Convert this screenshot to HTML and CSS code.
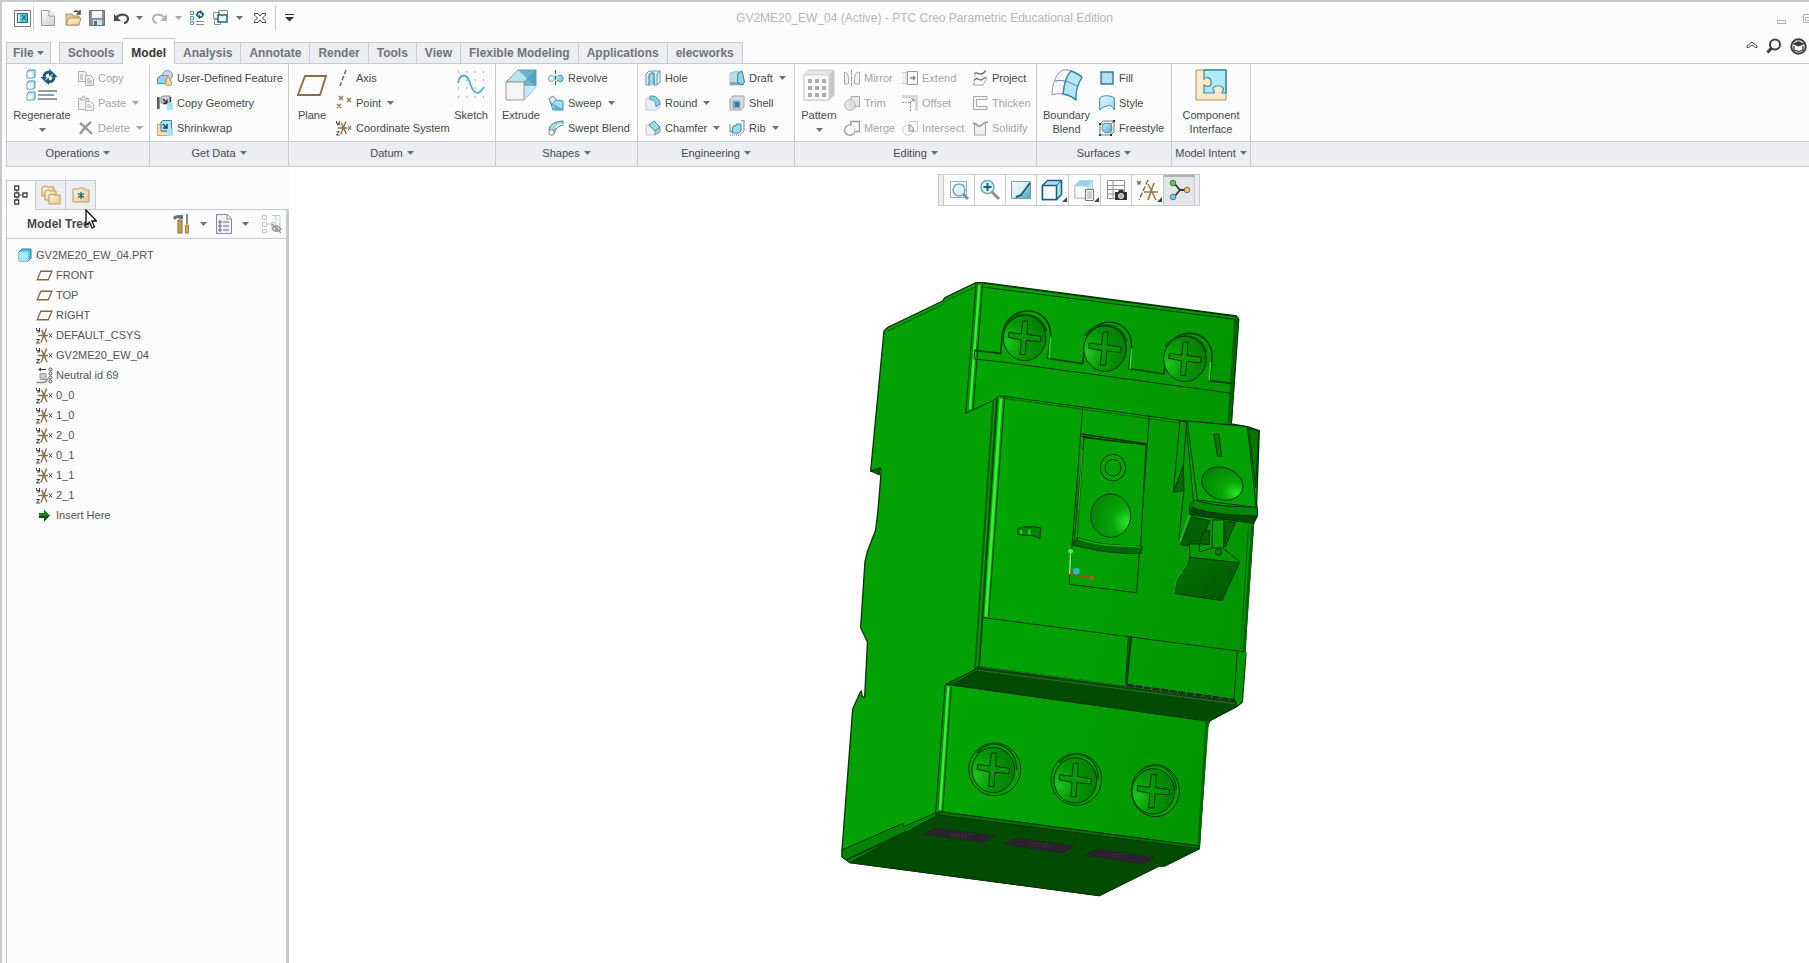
FILE: index.html
```html
<!DOCTYPE html>
<html lang="en">
<head>
<meta charset="utf-8">
<title>GV2ME20_EW_04 (Active) - PTC Creo Parametric Educational Edition</title>
<link rel="stylesheet" href="styles.css">
</head>
<body>
<svg class="defs" aria-hidden="true">
  <linearGradient id="gFold" x1="0" y1="0" x2="1" y2="1"><stop offset="0" stop-color="#fff6dc"/><stop offset="1" stop-color="#e6cb92"/></linearGradient>
  <linearGradient id="gBlue" x1="0" y1="0" x2="1" y2="1"><stop offset="0" stop-color="#d9f3fb"/><stop offset="1" stop-color="#4fa6c8"/></linearGradient>
  <linearGradient id="gPale" x1="0" y1="0" x2="1" y2="1"><stop offset="0" stop-color="#e9f9fd"/><stop offset="1" stop-color="#93d6ee"/></linearGradient>
  <linearGradient id="gGrey" x1="0" y1="0" x2="1" y2="1"><stop offset="0" stop-color="#fff"/><stop offset="1" stop-color="#c9ced4"/></linearGradient>
  <symbol id="caret" viewBox="0 0 7 4"><path d="M0 0h7L3.500 4z" fill="#6c6e70"/></symbol>
  <symbol id="csys" viewBox="0 0 17 17"><path d="M2 8.500h10M10.500 1.500 5 15.500M5.500 3 11 15" stroke="#8a6d42" stroke-width="1.400" fill="none"/><path d="M13 6.500l3 4m0-4l-3 4M.5 1v2.500h3M3.500 1v4H1M.5 12.500h3l-3 3.500h3.500" stroke="#3c3c3c" fill="none"/></symbol>
  <symbol id="plane" viewBox="0 0 16 12"><path d="M4.500 2H15l-3.500 8H1.200z" fill="#fdfbf6" stroke="#826747" stroke-width="1.200"/></symbol>
  <symbol id="i-copy" viewBox="0 0 16 16"><g fill="#f3f3f3" stroke="#a9a9a9"><path d="M.5 1.500h6l2 2v8h-8z"/><path d="M2 5h3M2 7h3M2 9h3"/><path d="M7.500 5.500h5l3 3v7h-8z"/><path d="M9 9h3M9 11h5M9 13h5"/></g></symbol>
  <symbol id="i-paste" viewBox="0 0 16 16"><g fill="#f3f3f3" stroke="#b3b3b3"><path d="M.5 3.500h10v11H.5z"/><path d="M2.500 5v-2h1.500l1-2h1l1 2h2v2z"/><path d="M7.500 6.500h5l3 3v6h-8z"/><path d="M9 10h3M9 12h5"/></g></symbol>
  <symbol id="i-delete" viewBox="0 0 16 16"><path d="M2 3c4 3 7 6 12 11M13 2C9 5 5 9 2 14" stroke="#969696" stroke-width="2.200" fill="none"/></symbol>
  <symbol id="i-udf" viewBox="0 0 16 16"><circle cx="10.500" cy="5.500" r="5" fill="#c3d8ec" stroke="#8793a3"/><path d="M.5 8.500l3-3h7v5l-2 3h-8z" fill="#90d2ec" stroke="#4a98b8"/><path d="M11 5l4 9c-2 2-6 2-7 0z" fill="#f2d997" stroke="#bb975c"/></symbol>
  <symbol id="i-cgeom" viewBox="0 0 16 16"><path d="M.5 2.500h2v11h-2zM4 2l3-1h6v7H4z" fill="#cfd3d9" stroke="#888f99"/><path d="M1 2v12M13.500 2v5" stroke="#37474f" stroke-width="1.500"/><path d="M6 4l4 4M10 4.500v4H6" stroke="#333" stroke-width="1.400" fill="none"/><path d="M10 8h6v7h-6z" fill="#a4e4f8"/></symbol>
  <symbol id="i-shrink" viewBox="0 0 16 16"><path d="M.5 4.500h4v7h7v4H.5z" fill="#f6dfa1" stroke="#c9a669"/><path d="M4 2l2-1.500h8.500v8L13 11H4z" fill="#b3e4f4" stroke="#3d829a"/><path d="M6 4l4 4M10 4v4H6" stroke="#17485b" stroke-width="1.500" fill="none"/><path d="M10 9h6v7h-6z" fill="#a4e4f8"/></symbol>
  <symbol id="i-axis" viewBox="0 0 16 16"><path d="M10 0 4 16" stroke="#826747" stroke-width="1.500" stroke-dasharray="4.500 2"/></symbol>
  <symbol id="i-point" viewBox="0 0 16 16"><path d="M3 1l4 4m0-4L3 5M11 3l4 4m0-4l-4 4M1 9l4 4m0-4l-4 4" stroke="#917345" stroke-width="1.400"/></symbol>
  <symbol id="i-revolve" viewBox="0 0 16 16"><circle cx="3.500" cy="8.500" r="3" fill="#eef2f5" stroke="#8391a2"/><circle cx="12" cy="8.500" r="3.200" fill="#8fd4ee" stroke="#3f90b2"/><path d="M5 6h6v4H5z" fill="#a7dcf0"/><path d="M7.500 0v16" stroke="#2b566b" stroke-dasharray="4 1.500"/></symbol>
  <symbol id="i-sweep" viewBox="0 0 16 16"><path d="M1 4l4-3 3 4 7 1v9H5L3 9z" fill="#a3def2" stroke="#4b8ba5"/><path d="M8 5l-5 4 12 6" fill="none" stroke="#4b8ba5"/><path d="M1 4l3 5 4-4-3-4z" fill="#e4ebf0" stroke="#8997a3"/><path d="M6 9l9 6H6z" fill="#56b1d2"/></symbol>
  <symbol id="i-sblend" viewBox="0 0 16 16"><path d="M1 10C2 4 6 2 15 1v4C9 6 8 9 6 14z" fill="url(#gBlue)" stroke="#537b8d"/><path d="M8 8c2-4 4-4 7-4" stroke="#eaf7fb" fill="none" stroke-width="1.500"/><circle cx="3.500" cy="12.500" r="2.800" fill="#f0f0f0" stroke="#888"/></symbol>
  <symbol id="i-hole" viewBox="0 0 16 16"><path d="M1 4l3-3h11v11l-3 3H9V7H6v8H1z" fill="#d4eef6" stroke="#7c95a1"/><path d="M4 15V5l2-2h3v12" fill="#98d7ec" stroke="#337d9b"/><path d="M12 4v11M12 4l3-3" stroke="#7c95a1"/></symbol>
  <symbol id="i-round" viewBox="0 0 16 16"><path d="M1 4l4-3h5l5 5v6l-4 3H1z" fill="#eceff1" stroke="#c1c7cc"/><path d="M6 1c5 0 8 3 9 8l-4 3c0-5-2-7-7-8z" fill="#8bd0ea" stroke="#5295b0"/></symbol>
  <symbol id="i-chamfer" viewBox="0 0 16 16"><path d="M1 5h3l6 6v4H1z" fill="#eef0f2" stroke="#c3c9ce"/><path d="M10 10l5-3v5l-5 3z" fill="#c3c9cf" stroke="#8c979f"/><path d="M4 5l5-4 6 6-5 4z" fill="#9adbf2" stroke="#418eab"/></symbol>
  <symbol id="i-draft" viewBox="0 0 16 16"><path d="M1 3l8-2 2 3v11H1z" fill="#b9dce9" stroke="#a6c4cf"/><path d="M1 12h14v3H1z" fill="#8fa3ad"/><path d="M9 3l4-2 2.500 11-2.500 3-4.500-3z" fill="#94d4ea" stroke="#3a7f99"/></symbol>
  <symbol id="i-shell" viewBox="0 0 16 16"><path d="M1 4l3-3h11v11l-3 3H1z" fill="#d8dbdf" stroke="#9aa3aa"/><path d="M4 6h7v7H4z" fill="#63b0cf" stroke="#9aa3aa"/><path d="M6 7h4v5H6z" fill="#2d7da0"/></symbol>
  <symbol id="i-rib" viewBox="0 0 16 16"><path d="M1 4v8l3-1M12 1l3-1v11l-3 3" fill="#eef2f4" stroke="#888"/><path d="M4 6h3V4h5v7l-2 2H3z" fill="#9cdcf2" stroke="#3b8cab"/><path d="M1 15h12" stroke="#666" stroke-dasharray="1 1"/></symbol>
  <symbol id="i-mirror" viewBox="0 0 16 16"><path d="M7.500 0v16" stroke="#999" stroke-dasharray="5 1"/><path d="M.5 2c4 1 4 3 4 12h-4zM15.500 2c-5 1-5 3-5 12h5z" fill="#f0f0f0" stroke="#aaa"/></symbol>
  <symbol id="i-trim" viewBox="0 0 16 16"><path d="M7 1.500h8.500v10H7z" fill="#e6e6e6" stroke="#aaa"/><circle cx="6" cy="10" r="5.300" fill="#e0e0e0" fill-opacity=".8" stroke="#b3b3b3"/></symbol>
  <symbol id="i-merge" viewBox="0 0 16 16"><path d="M6 1.500h9.500v10h-4" fill="none" stroke="#999" stroke-width="1.300"/><path d="M7 5V1.500M7 5a5.200 5.200 0 1 0 4 6" fill="none" stroke="#999" stroke-width="1.300"/><path d="M7 5c3 1 4 3 4 6" stroke="#ccc" fill="none"/></symbol>
  <symbol id="i-extend" viewBox="0 0 16 16"><path d="M0 2.500h5v11H0" fill="#eee" stroke="#ccc"/><path d="M5.500 1.500h10v13h-10z" fill="#fafafa" stroke="#999"/><path d="M8 8h5M11 6l2 2-2 2" stroke="#888" fill="none" stroke-width="1.400"/></symbol>
  <symbol id="i-offset" viewBox="0 0 16 16"><path d="M0 1.500h14.500V16" fill="none" stroke="#d8d8d8" stroke-width="3"/><path d="M0 7.500h8.500V16" fill="none" stroke="#999" stroke-dasharray="2 1"/><path d="M8 8l4-4M9 4h3v3" stroke="#888" fill="none"/></symbol>
  <symbol id="i-intersect" viewBox="0 0 16 16"><path d="M7 1.500h8.500v10H10" fill="none" stroke="#ccc"/><circle cx="6" cy="10" r="5.300" fill="none" stroke="#ccc"/><path d="M7 5c3 1 5 3 4 6H7z" fill="#eee" stroke="#888"/></symbol>
  <symbol id="i-project" viewBox="0 0 16 16"><path d="M2 3.500c3-2 4 1 7 .5s3-2 5-3M2 11c3-6 5 1 8-1.500l4-2.500" stroke="#6d6d78" fill="none" stroke-width="1.400"/><path d="M13 8l2 0-4 7H1l2-3" fill="none" stroke="#a5a5a5"/><path d="M3 4v4M10 4v4" stroke="#999" stroke-dasharray="1 1"/></symbol>
  <symbol id="i-thicken" viewBox="0 0 16 16"><path d="M15 1.500H1.500v13H15v-3H4.500v-7H15z" fill="#f3f3f3" stroke="#aaa"/></symbol>
  <symbol id="i-solidify" viewBox="0 0 16 16"><path d="M2.500 4v11h11V4c-2-3-3 3-6 2S4 1 2 5" fill="#efefef" stroke="#aaa"/><path d="M1 3c4 0 4 4 7 3s3-4 8-4" stroke="#999" fill="none" stroke-width="1.500"/></symbol>
  <symbol id="i-fill" viewBox="0 0 16 16"><path d="M2 2h12v12H2z" fill="#a9dcee" stroke="#2e7e9d" stroke-width="1.400"/><path d="M4 12l8-8M4 8l4-4M8 12l4-4" stroke="#d8f1f9"/></symbol>
  <symbol id="i-style" viewBox="0 0 16 16"><path d="M.7 3c3-3 11-3 14.600 0v12c-2-4-4-5-7-4s-5 1-7.600 4z" fill="url(#gPale)" stroke="#3a87a5"/></symbol>
  <symbol id="i-free" viewBox="0 0 16 16"><path d="M1 4l3-3h11v11l-3 3H1zM1 4h11v11M12 4l3-3" fill="none" stroke="#777"/><circle cx="8" cy="8" r="5" fill="url(#gBlue)" stroke="#4593b1"/><path d="M0 3h2v2H0zM14 0h2v2h-2zM0 14h2v2H0zM11 14h2v2h-2z" fill="#333"/></symbol>
  <symbol id="cycle" viewBox="0 0 18 16"><path d="M4 9.500C3.500 5 6 2.500 10 3.500M14 6.500c.5 4.500-2 7-6 6" fill="none" stroke="#205f7c" stroke-width="3"/><path d="M9 0l5 4-5 3.500zM9 16l-5-4 5-3.500zM.5 8h7L4 12zM10.500 8h7L14 4z" fill="#205f7c"/></symbol>
  <symbol id="b-regen" viewBox="0 0 32 32"><g fill="#b6e6f4" stroke="#4a93b1"><path d="M1 3l2-2h6v7l-2 1H1zM1 14l2-2h6v7l-2 1H1zM1 25l2-2h6v7l-2 1H1z"/></g><path d="M1.500 3.500h5v5h-5zM1.500 14.500h5v5h-5zM1.500 25.500h5v5h-5z" fill="#fff"/><path d="M12 22h19M12 26h16M12 30h19" stroke="#999ea3" stroke-width="2"/><use href="#cycle" x="14" y="0" width="18" height="16"/></symbol>
  <symbol id="b-plane" viewBox="0 0 32 32"><path d="M9 7h21l-6 19H2z" fill="none" stroke="#8a6d42" stroke-width="1.800"/></symbol>
  <symbol id="b-sketch" viewBox="0 0 32 32"><path d="M3 3h26M3 11h26M3 19h26M3 28h26" stroke="#555" stroke-dasharray="1 7.300"/><path d="M3 14C5 4 12 4 15 14s8 14 14 4" fill="none" stroke="#4fb0d2" stroke-width="1.800"/></symbol>
  <symbol id="b-extrude" viewBox="0 0 32 32"><path d="M1 13L13 1h18L19 13z" fill="#b8e3f1" stroke="#829daa"/><path d="M31 1v17L19 31V13z" fill="#78b3cc" stroke="#6e9aad"/><path d="M13 1h18v17z" fill="#3d9cc0" opacity=".65"/><path d="M19 17h12v1L19 31z" fill="#c6eaf5"/><path d="M1 13h18v18H1z" fill="#f5f5f7" stroke="#999"/></symbol>
  <symbol id="b-pattern" viewBox="0 0 32 32"><path d="M1 6l5-5h25v25l-5 5H1z" fill="#e4e5e6" stroke="#ccc"/><path d="M26 6l5-5v25l-5 5z" fill="#c6c9cb"/><path d="M1 6h25v25H1z" fill="#fafafa" stroke="#ccc"/><g fill="#a8acb0"><path d="M5 10h4v4H5zM12 10h4v4h-4zM19 10h4v4h-4zM5 17h4v4H5zM12 17h4v4h-4zM19 17h4v4h-4zM5 24h4v4H5zM12 24h4v4h-4zM19 24h4v4h-4z"/></g></symbol>
  <symbol id="b-boundary" viewBox="0 0 32 32"><path d="M1 26C1 16 4 5 12 1c8-1 14 3 19 7-4 7-7 14-6 23C18 25 9 23 1 26z" fill="#f3f5f7" stroke="#8d9aa5"/><path d="M20 2c4 1 8 4 11 6-4 7-7 14-6 23-4-4-8-5-13-6C13 16 15 7 20 2z" fill="#b5e6f7" stroke="#3186a8" stroke-width="1.300"/><path d="M4 12c9-2 17 2 23 6M12 25C13 16 15 7 20 2" fill="none" stroke="#53859b"/></symbol>
  <symbol id="b-comp" viewBox="0 0 32 32"><path d="M1 1h30v30H1z" fill="#faeac9" stroke="#b28f5c"/><path d="M9 1h22v23h-4c-1-1 3-3 1-5-2-3-8-3-10 0-1 2 3 3 1 5H9v-8c3 2 8 2 7-3 0-4-4-6-7-3z" fill="#aeeafa" stroke="#3a8aa5" stroke-width="1.200"/><path d="M9 1h22v23" fill="none" stroke="#3a8aa5"/></symbol>
</svg>

<i class="notch"></i>
<header class="titlebar">
  <nav class="quick" aria-label="Quick access">
    <button aria-label="Application"><svg width="17" height="17" viewBox="0 0 17 17"><path d="M.5.500h16v16H.5z" fill="#fff" stroke="#777"/><path d="M3 3h11v10H3z" fill="#2f6585"/><path d="M6 4h7v8H6z" fill="#4bc2d8"/><path d="M8 5l4 5m0-5l-4 5" stroke="#126078"/><path d="M4 4h2v8H4z" fill="#d8e4ed"/></svg></button>
    <span class="rule"></span>
    <button class="w26" aria-label="New"><svg width="16" height="18" viewBox="0 0 16 18"><path d="M1.500 1.500H9L14.500 7v9.500h-13z" fill="url(#gGrey)" stroke="#999"/><path d="M9 1.500V7h5.500" fill="#fff" stroke="#999"/></svg></button>
    <button class="w24" aria-label="Open"><svg width="17" height="18" viewBox="0 0 17 18"><path d="M1 5h6l1 2h6v9H1z" fill="#e2c78d" stroke="#b3945e"/><path d="M1 16l3-7h12l-2 7z" fill="url(#gFold)" stroke="#b3945e"/><path d="M9 3c2-2 4-1 5 1M11.500 5H15V1" fill="none" stroke="#444" stroke-width="1.500"/></svg></button>
    <button class="w24" aria-label="Save"><svg width="16" height="18" viewBox="0 0 16 18"><path d="M.5 1.500h15v15H.5z" fill="#8a8f95" stroke="#6e7276"/><path d="M3 2h10v7H3z" fill="#f3f4f6"/><path d="M4 11h9v5H4z" fill="#d3e4ef"/><path d="M5 12h3v4H5z" fill="#50748c"/></svg></button>
    <button class="w24" aria-label="Undo"><svg width="17" height="14" viewBox="0 0 17 14"><path d="M3 7c4-5 12-4 12 1 0 2-2 4-4 4" fill="none" stroke="#4a4c4f" stroke-width="2.200"/><path d="M1 3v7h7z" fill="#4a4c4f"/></svg></button>
    <button class="drop" aria-label="Undo list"><svg class="caret"><use href="#caret"/></svg></button>
    <button class="w26" aria-label="Redo"><svg width="17" height="14" viewBox="0 0 17 14"><path d="M14 7C10 2 2 3 2 8c0 2 2 4 4 4" fill="none" stroke="#b3b3b3" stroke-width="2"/><path d="M16 3v7H9z" fill="#b3b3b3"/></svg></button>
    <button class="drop faint" aria-label="Redo list"><svg class="caret"><use href="#caret"/></svg></button>
    <button class="w24" aria-label="Regenerate"><svg width="16" height="16" viewBox="0 0 16 16"><path d="M1.500 1.500h3v3h-3zM1.500 6.500h3v3h-3zM1.500 11.500h3v3h-3z" fill="#e6f8fc" stroke="#5c9cb6"/><path d="M7 11.500h8M7 14.500h8" stroke="#8b8f93"/><use href="#cycle" x="6" y="0" width="10" height="9"/></svg></button>
    <button class="w24" aria-label="Windows"><svg width="16" height="16" viewBox="0 0 16 16"><path d="M5.500.500h9v7h-9zM.5 2.500h6v6h-6zM1.500 9.500h6v5h-6z" fill="#fff" stroke="#8a9095"/><path d="M5 5h9v7H5z" fill="#e2f8fc" stroke="#236680" stroke-width="1.500"/></svg></button>
    <button class="drop" aria-label="Window list"><svg class="caret"><use href="#caret"/></svg></button>
    <button class="w28" aria-label="Close"><svg width="12" height="10" viewBox="0 0 12 10"><path d="M.5.500h3.500l2 2.500L8 .500h3.500v1.500L8.500 5l3 3v1.500H8L6 7 4 9.500H.5V8l3-3-3-3z" fill="#fff" stroke="#444"/></svg></button>
    <span class="rule"></span>
    <button class="w24" aria-label="Customize"><svg width="9" height="8" viewBox="0 0 9 8"><path d="M0 .500h9" stroke="#333"/><path d="M0 3h9L4.500 7.500z" fill="#333"/></svg></button>
  </nav>
  <h1>GV2ME20_EW_04 (Active) - PTC Creo Parametric Educational Edition</h1>
  <div class="winctl">
    <button aria-label="Minimize"><svg width="10" height="12" viewBox="0 0 10 12"><path d="M.5 8.500h8v3h-8z" fill="none" stroke="#aeb0b8"/></svg></button>
    <button aria-label="Restore"><svg width="10" height="12" viewBox="0 0 10 12"><path d="M.5 2.500h9v8h-9zM2.500 5.500h6v3h-6z" fill="none" stroke="#aeb0b8"/></svg></button>
  </div>
</header>

<div class="tabrow">
  <nav class="tabs" aria-label="Ribbon tabs">
    <button class="tab file">File<svg class="caret"><use href="#caret"/></svg></button>
    <button class="tab first">Schools</button>
    <button class="tab active">Model</button>
    <button class="tab">Analysis</button>
    <button class="tab">Annotate</button>
    <button class="tab">Render</button>
    <button class="tab">Tools</button>
    <button class="tab">View</button>
    <button class="tab">Flexible Modeling</button>
    <button class="tab">Applications</button>
    <button class="tab last">elecworks</button>
  </nav>
  <div class="help">
    <button aria-label="Minimize ribbon"><svg width="12" height="10" viewBox="0 0 12 10"><path d="M1 5l5-4 5 4v1.500H9.500L6 4 2.500 6.500H1z" fill="#fff" stroke="#444"/></svg></button>
    <button aria-label="Search"><svg width="16" height="16" viewBox="0 0 16 16"><circle cx="9" cy="6.500" r="5" fill="none" stroke="#3c3e42" stroke-width="2"/><path d="M5.500 10L1.500 14.500" stroke="#3c3e42" stroke-width="3"/></svg></button>
    <button aria-label="Learning"><svg width="17" height="17" viewBox="0 0 17 17"><circle cx="8.500" cy="8.500" r="7.200" fill="#fff" stroke="#3c3e42" stroke-width="2"/><path d="M2 6l6.500-3L15 6 8.500 8.500z" fill="#3c3e42"/><path d="M4 8v4l4.500 1.500L13 12V8" fill="none" stroke="#3c3e42" stroke-width="1.300"/></svg></button>
  </div>
</div>

<main class="ribbon">
  <section class="group">
    <div class="cmds ops">
      <button class="big"><svg><use href="#b-regen"/></svg><span>Regenerate</span><svg class="caret"><use href="#caret"/></svg></button>
      <div class="col off"><button><svg><use href="#i-copy"/></svg>Copy</button><button><svg><use href="#i-paste"/></svg>Paste<svg class="caret"><use href="#caret"/></svg></button><button><svg><use href="#i-delete"/></svg>Delete<svg class="caret"><use href="#caret"/></svg></button></div>
    </div>
    <button class="more">Operations<svg class="caret"><use href="#caret"/></svg></button>
  </section>
  <section class="group">
    <div class="cmds get">
      <div class="col"><button><svg><use href="#i-udf"/></svg>User-Defined Feature</button><button><svg><use href="#i-cgeom"/></svg>Copy Geometry</button><button><svg><use href="#i-shrink"/></svg>Shrinkwrap</button></div>
    </div>
    <button class="more">Get Data<svg class="caret"><use href="#caret"/></svg></button>
  </section>
  <section class="group">
    <div class="cmds datum">
      <button class="big"><svg><use href="#b-plane"/></svg><span>Plane</span></button>
      <div class="col"><button><svg><use href="#i-axis"/></svg>Axis</button><button><svg><use href="#i-point"/></svg>Point<svg class="caret"><use href="#caret"/></svg></button><button><svg><use href="#csys"/></svg>Coordinate System</button></div>
      <button class="big"><svg><use href="#b-sketch"/></svg><span>Sketch</span></button>
    </div>
    <button class="more">Datum<svg class="caret"><use href="#caret"/></svg></button>
  </section>
  <section class="group">
    <div class="cmds shapes">
      <button class="big"><svg><use href="#b-extrude"/></svg><span>Extrude</span></button>
      <div class="col"><button><svg><use href="#i-revolve"/></svg>Revolve</button><button><svg><use href="#i-sweep"/></svg>Sweep<svg class="caret"><use href="#caret"/></svg></button><button><svg><use href="#i-sblend"/></svg>Swept Blend</button></div>
    </div>
    <button class="more">Shapes<svg class="caret"><use href="#caret"/></svg></button>
  </section>
  <section class="group">
    <div class="cmds eng">
      <div class="col"><button><svg><use href="#i-hole"/></svg>Hole</button><button><svg><use href="#i-round"/></svg>Round<svg class="caret"><use href="#caret"/></svg></button><button><svg><use href="#i-chamfer"/></svg>Chamfer<svg class="caret"><use href="#caret"/></svg></button></div>
      <div class="col"><button><svg><use href="#i-draft"/></svg>Draft<svg class="caret"><use href="#caret"/></svg></button><button><svg><use href="#i-shell"/></svg>Shell</button><button><svg><use href="#i-rib"/></svg>Rib<svg class="caret"><use href="#caret"/></svg></button></div>
    </div>
    <button class="more">Engineering<svg class="caret"><use href="#caret"/></svg></button>
  </section>
  <section class="group">
    <div class="cmds edit">
      <button class="big"><svg><use href="#b-pattern"/></svg><span>Pattern</span><svg class="caret"><use href="#caret"/></svg></button>
      <div class="col off"><button><svg><use href="#i-mirror"/></svg>Mirror</button><button><svg><use href="#i-trim"/></svg>Trim</button><button><svg><use href="#i-merge"/></svg>Merge</button></div>
      <div class="col off"><button><svg><use href="#i-extend"/></svg>Extend</button><button><svg><use href="#i-offset"/></svg>Offset</button><button><svg><use href="#i-intersect"/></svg>Intersect</button></div>
      <div class="col off"><button class="on"><svg><use href="#i-project"/></svg>Project</button><button><svg><use href="#i-thicken"/></svg>Thicken</button><button><svg><use href="#i-solidify"/></svg>Solidify</button></div>
    </div>
    <button class="more">Editing<svg class="caret"><use href="#caret"/></svg></button>
  </section>
  <section class="group">
    <div class="cmds surf">
      <button class="big"><svg><use href="#b-boundary"/></svg><span>Boundary<br>Blend</span></button>
      <div class="col"><button><svg><use href="#i-fill"/></svg>Fill</button><button><svg><use href="#i-style"/></svg>Style</button><button><svg><use href="#i-free"/></svg>Freestyle</button></div>
    </div>
    <button class="more">Surfaces<svg class="caret"><use href="#caret"/></svg></button>
  </section>
  <section class="group">
    <div class="cmds intent">
      <button class="big"><svg><use href="#b-comp"/></svg><span>Component<br>Interface</span></button>
    </div>
    <button class="more">Model Intent<svg class="caret"><use href="#caret"/></svg></button>
  </section>
  <div class="group rest"><div class="cmds"></div><div class="more"></div></div>
</main>

<div class="work">
  <aside class="side">
    <div class="sidetabs">
      <button class="current" aria-label="Model Tree"><svg width="14" height="20" viewBox="0 0 14 20"><path d="M3 4v12M5 10h4" stroke="#555"/><path d="M.7 1h4v4h-4zM.7 8h4v4h-4zM.7 15h4v4h-4zM9 8h4v4H9z" fill="#fff" stroke="#444" stroke-width="1.300"/></svg></button>
      <button aria-label="Folder Browser"><svg width="20" height="20" viewBox="0 0 20 20"><g fill="url(#gFold)" stroke="#b8985f"><path d="M1 2l4-1 2 1h6v9H1z"/><path d="M4 6l3-1 2 1h6v9H4z"/><path d="M8 10l3-1 2 1h6v9H8z"/></g></svg></button>
      <button aria-label="Favorites"><svg width="18" height="16" viewBox="0 0 18 16"><path d="M1 2h5l2-1h4l1 2h4v12H1z" fill="url(#gFold)" stroke="#b8985f"/><path d="M9 5v7M6 6.500l6 4M12 6.500l-6 4" stroke="#17637b" stroke-width="1.300"/></svg></button>
      <svg class="pointer" viewBox="0 0 12 20"><path d="M1 1v15l3.500-3 2.500 6 2.500-1L7 12h4.500z" fill="#fff" stroke="#111" stroke-width="1.300"/></svg>
    </div>
    <div class="panel">
      <div class="panelhead">
        <h2>Model Tree</h2>
        <button aria-label="Settings"><svg width="18" height="20" viewBox="0 0 18 20"><path d="M1 4c1-3 4-3 10-3v4H9L5 4 3 6z" fill="#6c747c"/><path d="M6 6h4v13H6z" fill="#c99b53" stroke="#8d6a36"/><path d="M15 0v10" stroke="#7c868e" stroke-width="2"/><path d="M13.500 11h3v8h-3z" fill="#d8ac61" stroke="#9b7741"/></svg></button>
        <button class="arrow" aria-label="Settings menu"><svg class="caret"><use href="#caret"/></svg></button>
        <button aria-label="Show"><svg width="16" height="20" viewBox="0 0 16 20"><path d="M.5.500h11l4 4v15H.5z" fill="#eef2f5" stroke="#828b93"/><path d="M11 .500V5h4.500" fill="#fff" stroke="#828b93"/><path d="M7 8h6M7 12h6M7 16h6" stroke="#667"/><path d="M3 7h2v2H3zM3 11h2v2H3zM3 15h2v2H3z" fill="none" stroke="#667"/></svg></button>
        <button class="arrow" aria-label="Show menu"><svg class="caret"><use href="#caret"/></svg></button>
        <button class="filter" aria-label="Tree filter"><svg width="20" height="20" viewBox="0 0 20 20"><g fill="none" stroke="#c5c8ca"><path d="M.5 1.500h4v4h-4zM.5 8.500h4v4h-4zM.5 15.500h4v3h-4zM9.500 8.500h4v4h-4zM10 1.500h8v12M5 10h5M14 1v6"/></g><path d="M10 15c3-4 6-4 9 0-3 3-6 3-9 0zM10 10l9 9" fill="none" stroke="#8e9498" stroke-width="1.300"/><circle cx="14.500" cy="15" r="1.500" fill="#8e9498"/></svg></button>
      </div>
      <ul class="tree">
        <li class="root"><svg width="14" height="14" viewBox="0 0 14 14"><path d="M1 4l3-3h9v9l-3 3H1z" fill="#5fc2e2" stroke="#25809f"/><path d="M1 4h9v9H1z" fill="#a6e8fa"/></svg>GV2ME20_EW_04.PRT</li>
        <li><svg><use href="#plane"/></svg>FRONT</li>
        <li><svg><use href="#plane"/></svg>TOP</li>
        <li><svg><use href="#plane"/></svg>RIGHT</li>
        <li><svg><use href="#csys"/></svg>DEFAULT_CSYS</li>
        <li><svg><use href="#csys"/></svg>GV2ME20_EW_04</li>
        <li><svg viewBox="0 0 17 17"><path d="M4 2.500h6" stroke="#444"/><path d="M2 2.500l3-2v4z" fill="#444"/><path d="M4 6.500h6v6H4z" fill="#c6c9cc" stroke="#999"/><path d="M.5 15.500h8l4-4" stroke="#888" fill="none" stroke-width="1.500"/><g fill="none" stroke="#444"><circle cx="14.500" cy="2.500" r="1.500"/><circle cx="14.500" cy="6.500" r="1.500"/><circle cx="14.500" cy="10.500" r="1.500"/><circle cx="14.500" cy="14.500" r="1.500"/></g></svg>Neutral id 69</li>
        <li><svg><use href="#csys"/></svg>0_0</li>
        <li><svg><use href="#csys"/></svg>1_0</li>
        <li><svg><use href="#csys"/></svg>2_0</li>
        <li><svg><use href="#csys"/></svg>0_1</li>
        <li><svg><use href="#csys"/></svg>1_1</li>
        <li><svg><use href="#csys"/></svg>2_1</li>
        <li><svg viewBox="0 0 17 17"><path d="M3 6h5V2.500l6 6L8 14.500V11H3z" fill="#0a8a0a"/><path d="M3 9h10.500L8 14.500V11H3z" fill="#0a4f0a"/></svg>Insert Here</li>
      </ul>
    </div>
  </aside>

  <div class="canvas">
    <svg class="model" viewBox="289 167 1520 796" preserveAspectRatio="xMidYMin meet" role="img" aria-label="Circuit breaker model">
      <defs>
        <linearGradient id="side" x1="0" x2="1" y1="0" y2="0"><stop offset="0" stop-color="#03a203"/><stop offset="1" stop-color="#039f03"/></linearGradient>
        <linearGradient id="front" x1="0" x2="1" y1="0" y2=".2"><stop offset="0" stop-color="#02a702"/><stop offset="1" stop-color="#029702"/></linearGradient>
        <linearGradient id="flap" x1="0" x2="1" y1="0" y2="1"><stop offset="0" stop-color="#027302"/><stop offset="1" stop-color="#025602"/></linearGradient>
        <radialGradient id="dish" cx=".9" cy=".65" r="1"><stop offset="0" stop-color="#2ce52c"/><stop offset=".35" stop-color="#07a607"/><stop offset="1" stop-color="#037f03"/></radialGradient>
        <radialGradient id="dome" cx=".1" cy=".6" r="1"><stop offset="0" stop-color="#1fc51f"/><stop offset=".4" stop-color="#029b02"/><stop offset="1" stop-color="#037703"/></radialGradient>
        <g id="screw"><ellipse rx="64" ry="68" fill="url(#dome)" stroke="#052f05" stroke-width="3"/><path d="M-6-50 9-51 7-11 49-5 47 11 5 7 2 50-14 49-10 6-49-2-47-17-10-12z" fill="#049804" stroke="#052f05" stroke-width="3"/></g>
      </defs>
      <g transform="translate(830 270) scale(.33333)" stroke="#073507" stroke-width="3" stroke-linejoin="round" fill="none">
        <path d="M438 38h24L1220 138l6 10-22 314 48 8 36 12-8 218 2 38-12 24-26 384 4 2-11 148-17 14-80 42-8 18-24 366-103 52h-17L808 1877 60 1778 36 1760v-20L68 1318l22-50 4-5 3 18h7l8-156v-10l-20-42 13-198 7-30 25-65 7-60 8-95 1-28-31 6 40-420 10-10 166-80 7-10z" fill="url(#side)" stroke-width="4"/>
        <path d="M172 184 338 104l7-10 95-45" stroke="#0a5f0a"/>
        <path d="M122 603l28-10-2 22z" fill="#056005"/>
        <path d="M455 40 1218 140l6 8-24 325-700-98-85 45 20-180z" fill="url(#front)" stroke="none"/>
        <path d="M515 378l753 107-20 660-14 150L435 1200z" fill="url(#front)" stroke="none"/>
        <path d="M357 1245l780 110-28 376L325 1625z" fill="url(#front)" stroke="none"/>
        <path d="M462 40 1220 140M450 50 1215 148" stroke-width="3"/>
        <path d="M447 45 419 422" stroke="#0b8d0b" stroke-width="16"/><path d="M448 45 420 418" stroke="#33ee33" stroke-width="8"/><path d="M438 40 407 430M458 42 430 418"/>
        <path d="M1220 143l-20 318" stroke="#056405" stroke-width="9"/><path d="M1226 148l-22 314M1214 150l-20 310" stroke-width="2"/>
        <path d="M434 241l78 9 4-45c2-105 146-111 146-8l-9 68 105 16 6-46c2-101 142-106 141-5l-9 66 106 16 5-50c2-94 139-98 140 0l-8 70 70 9" stroke="#063f06" stroke-width="5"/>
        <path d="M662 200l-5 65M905 235l-5 62M1142 276l-5 55" stroke="#32dc32" stroke-width="4"/>
        <path d="M525 166c24-42 103-48 124 17M766 197c24-39 104-48 124 17M1007 230c24-39 102-48 122 17" stroke="#045a04" stroke-width="7"/>
        <path d="M434 267l90 10 682 93M434 241l-2 27M407 430l85-40 17-13L1055 452l150 12"/>
        <path d="M510 383l745 105" stroke="#0a6d0a" stroke-width="4"/>
        <use href="#screw" x="584" y="204"/><use href="#screw" x="825" y="236"/><use href="#screw" x="1065" y="267"/>
        <path d="M490 390 435 1200M500 385 446 1200" stroke="#0b5b0b" stroke-width="6"/><path d="M513 385 468 1040" stroke="#33ee33" stroke-width="9"/><path d="M524 380 476 1040M502 385 458 1045l-10 150"/>
        <path d="M758 410l-6 83-35 450 203 25 8-115M958 435l-28 390"/>
        <path d="M754 492l196 30M756 500l192 27" stroke-width="5"/>
        <path d="M762 503l186 22-17 320c-54 8-140-6-200-20z" fill="#02a002"/>
        <path d="M762 505 742 800M751 500l-18 320" stroke="#1e5f1e" stroke-width="3"/><path d="M757 540l-12 180" stroke="#4fc04f" stroke-width="2"/>
        <path d="M741 802c64 24 130 24 196 26l-4 22c-70 4-144-10-204-25z" fill="#026802"/><path d="M746 806c60 22 120 22 186 24" stroke="#17a517" stroke-width="5"/>
        <ellipse cx="849" cy="593" rx="38" ry="40"/><ellipse cx="849" cy="593" rx="24" ry="25"/><ellipse cx="842" cy="737" rx="60" ry="65" fill="url(#dish)"/>
        <path d="M1050 452l-20 215 30-80 10-130z" fill="#049a04"/><path d="M1030 667l30-80 2 74z" fill="#026a02"/><path d="M1062 660l-16 150"/>
        <path d="M1060 452l192 18 26 236-5 25-65-10-118-30-22-235z" fill="#02a002"/>
        <path d="M1072 455l30 235 175 22"/><path d="M1256 474l30 10-9 170z" fill="#047904"/>
        <path d="M1092 690c60 18 120 20 190 22v22l-12 25-190-26-2-22z" fill="#048804"/><path d="M1086 712c60 22 120 22 194 26l-12 22-188-26z" fill="#024802"/>
        <path d="M1085 740l55 12-35 80-53-8z" fill="#025f02"/><path d="M1078 735l-28 80" stroke="#27b227" stroke-width="5"/><path d="M1148 750h34l-2 95h-34z" fill="#05a005"/><path d="M1184 756h33l-32 76z" fill="#036303"/><path d="M1112 822c0-30 14-45 26-40v42z" fill="#036303"/>
        <path d="M1078 822h30v24l40-12h30l51 40-4 6-145-18z" fill="#049704"/><circle cx="1166" cy="846" r="10" fill="#057c05"/>
        <path d="M1080 862l148 16-52 114-143-22c4-60 40-60 47-108z" fill="url(#flap)"/><path d="M1058 907c-25 20-22 40-25 62" stroke="#12b612"/>
        <path d="M1152 493h15l8 66-13-1z" fill="#047a04"/><ellipse cx="1177" cy="641" rx="63" ry="48" transform="rotate(18 1177 641)" fill="url(#dish)"/>
        <path d="M563 775c20-7 50-5 69-2l-2 32c-14-2-14-9-28-8-14-1-20 0-39-4z" fill="#058305"/><path d="M573 780v12M598 778v16" stroke="#1fcf1f" stroke-width="7"/>
        <path d="M1268 765l-26 380" stroke="#056405" stroke-width="9"/><path d="M1256 765l-24 370" stroke-width="2"/>
        <path d="M460 1043l765 100 20 2M905 1097l-15 147M895 1100l-8 140M1222 1145l-10 145"/><path d="M902 1100l-12 142" stroke-width="6"/>
        <path d="M347 1243l88-44 10-10 773 104 2 15-84 46z" fill="#014a01"/><path d="M347 1243l88-44 10-10-3 13-75 42z" fill="#057005"/><path d="M445 1201l768 100M450 1190l765 102" stroke="#2f6f2f"/><path d="M890 1245l325 45" stroke="#2a212c" stroke-width="7" stroke-dasharray="22 4"/>
        <path d="M353 1250 327 1622" stroke="#0b8d0b" stroke-width="16"/><path d="M355 1250 330 1620" stroke="#33ee33" stroke-width="8"/><path d="M345 1245 317 1628M364 1250 338 1628"/>
        <path d="M1130 1355l-24 375" stroke="#056405" stroke-width="8"/>
        <path d="M318 1628l18-2 772 102v8l-103 51h-17L808 1877 60 1778z" fill="#014a01"/><path d="M318 1628l18-2 772 102v8L322 1634z" fill="#067206"/>
        <path d="M36 1740 219 1660l2 10 97-42v10L60 1778l-24-18z" fill="#048404"/><path d="M52 1768l180-84" stroke="#034003" stroke-width="6"/>
        <g stroke="#1e2d1e" fill="#2a222c"><path d="M280 1692l38-18 177 24-38 20z"/><path d="M520 1722l38-18 177 24-38 22z"/><path d="M764 1756l38-19 172 25-34 20z"/></g>
        <g stroke="#633c46" stroke-dasharray="3 6"><path d="M360 1693h65M370 1700h45M596 1720h62M600 1728h55M850 1753h45M850 1761h45"/></g>
        <g fill="#02a002"><ellipse cx="494" cy="1498" rx="78" ry="79"/><ellipse cx="739" cy="1528" rx="76" ry="78"/><ellipse cx="976" cy="1562" rx="72" ry="78"/></g>
        <path d="M440 1450c38-50 120-30 120 50M687 1478c38-44 118-30 118 50M925 1510c38-44 110-26 114 50" stroke="#045504" stroke-width="5"/>
        <use href="#screw" x="490" y="1500"/><use href="#screw" x="736" y="1531"/><use href="#screw" x="970" y="1564"/>
        <path d="M722 850l-3 62" stroke="#9df59d" stroke-width="4"/><circle cx="722" cy="844" r="7" fill="#43ff43" stroke="none"/>
        <path d="M719 913l66 10" stroke="#b74223" stroke-width="4"/><circle cx="785" cy="924" r="7" fill="#c14f2a" stroke="none"/><circle cx="739" cy="904" r="10" fill="#35b3d8" stroke="none"/>
      </g>
    </svg>
    <div class="viewbar" role="toolbar" aria-label="View">
      <button aria-label="Refit"><svg viewBox="0 0 22 22"><path d="M2.500 2.500h16v16h-16z" fill="#fff" stroke="#a6abaf"/><circle cx="11" cy="11" r="6" fill="#dff5fb" stroke="#6aa9c0" stroke-width="1.500"/><path d="M15 15l5 5" stroke="#8f9396" stroke-width="3"/></svg></button>
      <button aria-label="Zoom In"><svg viewBox="0 0 22 22"><circle cx="8.500" cy="8" r="6.500" fill="#dff5fb" stroke="#7aa3b4" stroke-width="1.500"/><path d="M8.500 4v8M4.500 8h8" stroke="#166480" stroke-width="2"/><path d="M13 13l7 7" stroke="#8f9396" stroke-width="3"/></svg></button>
      <button aria-label="Repaint"><svg viewBox="0 0 22 22"><path d="M1.500 2.500h19v17h-19z" fill="url(#gBlue)" stroke="#7f9aa5"/><path d="M2 3h17C17 13 12 17 2 19z" fill="#f8fcfd" opacity=".7"/><path d="M6 18l5-2 9-12" fill="none" stroke="#1b5e78" stroke-width="2"/></svg></button>
      <button class="menu" aria-label="Display Style"><svg viewBox="0 0 22 22"><path d="M1.500 6.500l5-5h14v14l-5 5h-14z" fill="#aae3f4" stroke="#1d5f7a" stroke-width="1.500"/><path d="M1.500 6.500h14v14h-14z" fill="#f5fbfd" stroke="#1d5f7a" stroke-width="1.500"/><path d="M15.500 6.500l5-5" stroke="#1d5f7a"/></svg></button>
      <button class="menu" aria-label="Saved Orientations"><svg viewBox="0 0 22 22"><path d="M1.500 6.500l5-5h13v13l-4 5h-14z" fill="#c3e6f2" stroke="#b5cfd8"/><path d="M2 7h13v12H2z" fill="#f7f7f8" stroke="#c5c9cc"/><path d="M7 2h12l-4 5H2z" fill="#9ad2e6"/><path d="M12.500 10.500h8v11h-8z" fill="#fff" stroke="#777"/><path d="M14 13h5M14 15h5M14 17h5M14 19h5" stroke="#999"/></svg></button>
      <button aria-label="View Manager"><svg viewBox="0 0 22 22"><path d="M2.500 1.500h17v18h-17zM2 6.500h17M2 10.500h17M2 15h8M8 1v18" fill="none" stroke="#8d9295"/><path d="M10 13h3l1-2h4l1 2h3v8H10z" fill="#333"/><circle cx="16" cy="17" r="2.500" fill="#9aa" stroke="#eee"/></svg></button>
      <button class="menu" aria-label="Datum Display"><svg viewBox="0 0 22 22"><path d="M1 2l4 4m0-4L1 6M12 1L3 21" stroke="#826747" stroke-width="1.500" stroke-dasharray="5 2" fill="none"/><path d="M8 13h14M18 4l-6 17M12 5l8 16" stroke="#94784a" stroke-width="1.600"/></svg></button>
      <button class="pressed" aria-label="Spin Center"><svg viewBox="0 0 22 22"><path d="M6 4l6 7h7M12 11l-6 7" stroke="#333" stroke-width="1.800" fill="none"/><circle cx="5" cy="4" r="2.800" fill="#6bc063" stroke="#397a36"/><circle cx="19" cy="11" r="2.800" fill="#eebb84" stroke="#8f653c"/><circle cx="5" cy="18" r="2.800" fill="#86c9e4" stroke="#3a7f9b"/></svg></button>
    </div>
  </div>
</div>
</body>
</html>
```

FILE: styles.css
```css
:root {
  --line: #c6cacd;
  --strip: #eceef1;
  --paper: #fcfcfd;
  --ink: #46484b;
}
* { box-sizing: border-box; }
body {
  margin: 0;
  min-height: 100vh;
  display: flex;
  flex-direction: column;
  position: relative;
  overflow-x: hidden;
  border-top: 2px solid var(--line);
  border-left: 2px solid var(--line);
  background: var(--paper);
  color: var(--ink);
  font: 11px/14px "Liberation Sans", Arial, sans-serif;
}
button {
  display: flex;
  align-items: center;
  margin: 0;
  padding: 0;
  border: 0;
  background: none;
  color: inherit;
  font: inherit;
  white-space: nowrap;
}
svg { display: block; flex: none; }
.defs { position: absolute; width: 0; height: 0; }
.caret { width: 7px; height: 4px; }
.notch {
  position: absolute;
  top: -2px;
  left: 52%;
  width: 22px;
  height: 1px;
  background: #3f4245;
}

/* title bar */
.titlebar {
  display: grid;
  grid-template-columns: 1fr auto 1fr;
  align-items: center;
  height: 32px;
  padding-left: 10px;
}
.quick { display: flex; align-items: center; }
.quick button { justify-content: center; width: 20px; height: 24px; }
.quick .w24 { width: 24px; }
.quick .w26 { width: 26px; }
.quick .w28 { width: 28px; }
.quick .drop { width: 13px; }
.quick .faint { opacity: .6; }
.rule { width: 1px; height: 24px; margin: 0 1px; background: var(--line); }
.titlebar h1 {
  margin: 0;
  padding-left: 28px;
  color: #b4b7ba;
  font-size: 12px;
  font-weight: 400;
}
.winctl { display: flex; justify-content: flex-end; gap: 16px; overflow: hidden; }
.winctl button:last-child { margin-right: -4px; }

/* ribbon tabs */
.tabrow {
  display: flex;
  justify-content: space-between;
  align-items: flex-end;
  height: 30px;
  margin-left: 4px;
  border-bottom: 1px solid var(--line);
}
.tabs { display: flex; align-items: flex-end; margin-bottom: -1px; }
.tab {
  height: 22px;
  padding: 0 8px;
  border: solid var(--line);
  border-width: 1px 1px 1px 0;
  background: var(--strip);
  color: #707377;
  font-size: 12px;
  font-weight: 700;
}
.tab.file { gap: 3px; padding: 0 6px; margin-right: 8px; border-left-width: 1px; }
.tab.first { border-left-width: 1px; }
.tab.active {
  height: 26px;
  padding-top: 3px;
  border-bottom-color: var(--paper);
  background: var(--paper);
  color: #333;
}
.help { display: flex; align-items: center; gap: 8px; height: 29px; padding: 0 2px 5px 0; }

/* ribbon */
.ribbon {
  display: grid;
  grid-template-columns: 143px 139px 207px 142px 157px 242px 135px 79px 1fr;
  margin-left: 4px;
  border-left: 1px solid var(--line);
  border-bottom: 1px solid var(--line);
}
.group { border-right: 1px solid var(--line); }
.group.rest { border-right: 0; }
.cmds { display: grid; gap: 7px; height: 77px; padding-top: 1px; }
.ops { grid-template-columns: 58px 1fr; padding-left: 6px; }
.get { padding-left: 7px; }
.datum { grid-template-columns: 34px 105px 46px; padding-left: 6px; }
.shapes { grid-template-columns: 40px 1fr; padding-left: 5px; }
.eng { grid-template-columns: 77px 1fr; padding-left: 7px; }
.edit { grid-template-columns: 42px 54px 66px 1fr; column-gap: 4px; padding-left: 3px; }
.surf { grid-template-columns: 51px 1fr; padding-left: 4px; }
.big { flex-direction: column; padding-top: 4px; text-align: center; justify-content: flex-start; }
.big > svg:first-child { width: 32px; height: 32px; margin-bottom: 7px; }
.big .caret { margin-top: 6px; }
.col button { height: 25px; }
.col svg:first-child { width: 16px; height: 16px; margin-right: 4px; }
.col .caret { margin-left: 6px; }
.off { color: #a3a5a8; }
.off .on { color: var(--ink); }
.off .caret { opacity: .6; }
.more {
  justify-content: center;
  gap: 4px;
  width: 100%;
  height: 25px;
  padding-bottom: 2px;
  border-top: 1px solid var(--line);
  background: var(--strip);
}

/* work area */
.work { flex: 1; display: grid; grid-template-columns: 287px 1fr; }
.side { display: flex; flex-direction: column; padding: 13px 0 0 4px; }
.sidetabs { position: relative; display: flex; margin-bottom: -1px; }
.sidetabs button {
  justify-content: center;
  width: 30px;
  height: 30px;
  border: 1px solid var(--line);
  border-left-width: 0;
  background: var(--strip);
}
.sidetabs .current { border-left-width: 1px; border-bottom-color: var(--paper); background: var(--paper); }
.pointer { position: absolute; left: 79px; top: 29px; width: 12px; height: 20px; z-index: 1; }
.panel { flex: 1; border: solid var(--line); border-width: 1px 3px 0 1px; }
.panelhead {
  display: flex;
  align-items: center;
  height: 29px;
  padding: 0 4px 0 20px;
  border-bottom: 1px solid var(--line);
}
.panelhead h2 { flex: 1; margin: 0; font-size: 12px; font-weight: 700; }
.panelhead .arrow { width: 26px; justify-content: center; }
.panelhead .filter { margin-left: 4px; }
.tree { margin: 0; padding: 6px 0; list-style: none; color: #505357; }
.tree li { display: flex; align-items: center; gap: 3px; height: 20px; padding-left: 29px; }
.tree li svg { width: 17px; height: 17px; }
.tree .root { gap: 4px; padding-left: 11px; }
.tree .root svg { width: 14px; height: 14px; }

.canvas { display: grid; background: #fff; }
.model { grid-area: 1 / 1; width: 100%; height: 100%; min-height: 0; }
.viewbar {
  grid-area: 1 / 1;
  align-self: start;
  justify-self: center;
  display: flex;
  margin: 7px 0 0 39px;
  border: 1px solid var(--line);
  padding: 0 4px;
  background: var(--strip);
}
.viewbar button {
  position: relative;
  justify-content: center;
  width: 31px;
  height: 30px;
  border-left: 1px solid var(--line);
  background: #fdfdfe;
}
.viewbar .menu { width: 32px; }
.viewbar button:last-child { width: 32px; border-right: 1px solid var(--line); }
.viewbar svg { width: 22px; height: 22px; }
.viewbar .menu::after {
  content: "";
  position: absolute;
  right: 1px;
  bottom: 3px;
  border-left: 5px solid transparent;
  border-bottom: 5px solid #444;
}
.viewbar .pressed { background: #e3e5e8; box-shadow: inset 0 2px #aeb1b4; }
```
